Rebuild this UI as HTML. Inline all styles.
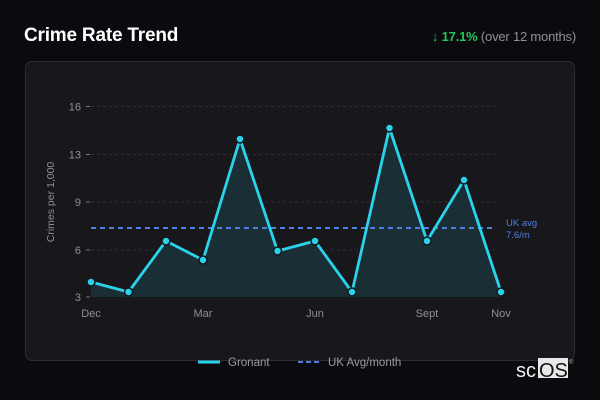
<!DOCTYPE html>
<html><head><style>
body{margin:0;width:600px;height:400px;background:#0b0b0f;font-family:"Liberation Sans",sans-serif;overflow:hidden;position:relative}
.t{position:absolute;left:24px;top:25px;color:#fff;font-weight:bold;font-size:19px;letter-spacing:-0.2px}
.c{position:absolute;right:24px;top:29px;font-size:13px;color:#8f8f95;letter-spacing:-0.2px}
.c b{color:#22c55e}
.card{position:absolute;left:24.5px;top:60.5px;width:550px;height:300px;background:#17171c;border:1px solid #2c2c32;border-radius:7px;box-sizing:border-box}
svg{position:absolute;left:0;top:0}
</style></head><body>
<div class="t">Crime Rate Trend</div>
<div class="c"><b><span style="font-weight:normal">↓</span> 17.1%</b> (over 12 months)</div>
<div class="card"></div>
<svg width="600" height="400" font-family="Liberation Sans, sans-serif">
<g stroke="#2e2e33" stroke-dasharray="3,3" stroke-width="1">
<line x1="91" y1="106.5" x2="495" y2="106.5"/><line x1="91" y1="154.5" x2="495" y2="154.5"/><line x1="91" y1="202" x2="495" y2="202"/><line x1="91" y1="250" x2="495" y2="250"/>
</g>
<g stroke="#777" stroke-width="1"><line x1="86" y1="106.5" x2="90" y2="106.5"/><line x1="86" y1="154.5" x2="90" y2="154.5"/><line x1="86" y1="202" x2="90" y2="202"/><line x1="86" y1="250" x2="90" y2="250"/><line x1="86" y1="297" x2="90" y2="297"/></g>
<g fill="#8f8f95" font-size="11" text-anchor="end"><text x="81" y="110.5">16</text><text x="81" y="158.5">13</text><text x="81" y="206">9</text><text x="81" y="254">6</text><text x="81" y="301">3</text></g>
<text transform="translate(54,202) rotate(-90)" fill="#8f8f95" font-size="10.5" text-anchor="middle">Crimes per 1,000</text>
<g fill="#8f8f95" font-size="11" text-anchor="middle"><text x="91" y="317">Dec</text><text x="203" y="317">Mar</text><text x="315" y="317">Jun</text><text x="427" y="317">Sept</text><text x="501" y="317">Nov</text></g>
<polygon fill="#1b3a40" fill-opacity="0.7" points="91,282 128.5,292 166,241 203,260 240,139 277.5,251 315,241 352,292 389.5,128 427,241 464,180 501,292 501,297 91,297"/>
<line x1="91" y1="228" x2="495" y2="228" stroke="#4f7fe0" stroke-width="2" stroke-dasharray="5,4"/>
<text x="506" y="226" fill="#4f7fe0" font-size="9.5">UK avg</text><text x="506" y="238" fill="#4f7fe0" font-size="9.5">7.6/m</text>
<polyline fill="none" stroke="#2bd3ea" stroke-width="2.8" stroke-linejoin="round" points="91,282 128.5,292 166,241 203,260 240,139 277.5,251 315,241 352,292 389.5,128 427,241 464,180 501,292"/>
<g fill="#2bd3ea" stroke="#17171c" stroke-width="1.5">
<circle cx="91" cy="282" r="4"/><circle cx="128.5" cy="292" r="4"/><circle cx="166" cy="241" r="4"/><circle cx="203" cy="260" r="4"/><circle cx="240" cy="139" r="4"/><circle cx="277.5" cy="251" r="4"/><circle cx="315" cy="241" r="4"/><circle cx="352" cy="292" r="4"/><circle cx="389.5" cy="128" r="4"/><circle cx="427" cy="241" r="4"/><circle cx="464" cy="180" r="4"/><circle cx="501" cy="292" r="4"/>
</g>
<line x1="198" y1="362" x2="220" y2="362" stroke="#2bd3ea" stroke-width="3"/>
<text x="228" y="366" fill="#9a9aa0" font-size="11.5">Gronant</text>
<line x1="298" y1="362" x2="322" y2="362" stroke="#4f7fe0" stroke-width="2" stroke-dasharray="5,3"/>
<text x="328" y="366" fill="#9a9aa0" font-size="11.5">UK Avg/month</text>
<rect x="538" y="358" width="30" height="20" fill="#e8e8e8"/>
<text x="516" y="377" fill="#eee" font-size="20" font-family="Liberation Sans, sans-serif">sc</text>
<text x="539" y="377" fill="#111" font-size="20" font-family="Liberation Sans, sans-serif">OS</text>
<text x="569" y="364" fill="#aaa" font-size="6">®</text>
</svg>
</body></html>
